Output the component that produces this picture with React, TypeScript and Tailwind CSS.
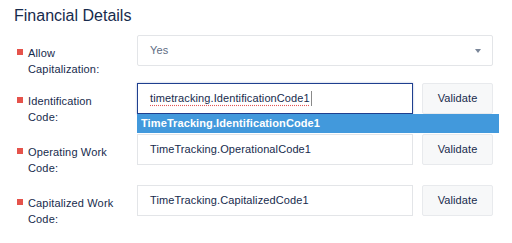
export default function App() {
  return (
    <div className="w-[512px] h-[243px] bg-white pl-[14px] pt-[6px] text-[#172b4d] overflow-hidden" style={{ fontFamily: '"Liberation Sans", Arial, sans-serif' }}>
      <h2 className="text-[16px] leading-[20px] font-normal">Financial Details</h2>

      {/* Allow capitalization */}
      <div className="flex h-[31px] mt-[9px]">
        <FieldLabel first="Allow" second="Capitalization:" />
        <div className="w-[356px] h-[31px] border border-[#e3e5e8] rounded-[2px] flex items-center justify-between pl-[12px] pr-[11px]">
          <span className="text-[11px] tracking-[0.1px] text-[#5e6c84]">Yes</span>
          <span className="w-0 h-0 border-l-[3.5px] border-r-[3.5px] border-t-[4px] border-l-transparent border-r-transparent border-t-[#7a8699]" />
        </div>
      </div>

      {/* Identification code, focused with suggestion */}
      <div className="flex h-[31px] mt-[17px] relative">
        <FieldLabel first="Identification" second="Code:" />
        <div className="w-[276px] h-[31px] border border-[#1f3f8f] shadow-[0_0_2px_rgba(31,63,143,0.35)] flex items-center pl-[12px]">
          <span className="text-[11px] tracking-[0.1px] underline decoration-dotted decoration-[#e25555] underline-offset-[3px]">timetracking.IdentificationCode1</span>
          <span className="w-px h-[15px] bg-[#8a8a8a] ml-px" />
        </div>
        <ValidateButton />
        <div className="absolute left-[123px] top-[31px] w-[362px] h-[19px] bg-[#4299dc] flex items-center pl-[4px] z-10">
          <span className="text-[11px] font-bold text-white tracking-[0.1px]">TimeTracking.IdentificationCode1</span>
        </div>
      </div>

      <div className="flex h-[31px] mt-[20px]">
        <FieldLabel first="Operating Work" second="Code:" />
        <TextField value="TimeTracking.OperationalCode1" />
        <ValidateButton />
      </div>

      <div className="flex h-[31px] mt-[20px]">
        <FieldLabel first="Capitalized Work" second="Code:" />
        <TextField value="TimeTracking.CapitalizedCode1" />
        <ValidateButton />
      </div>
    </div>
  );
}

function FieldLabel({ first, second }: { first: string; second: string }) {
  return (
    <div className="w-[123px] h-[31px] flex pl-[3px] pt-[10px]">
      <span className="w-[6px] h-[6px] bg-[#e5534b] mt-[4px] shrink-0" />
      <div className="ml-[5px] w-[92px] text-[11px] leading-[16px] tracking-[0.15px]">
        <div>{first}</div>
        <div>{second}</div>
      </div>
    </div>
  );
}

function TextField({ value }: { value: string }) {
  return (
    <div className="w-[276px] h-[31px] border border-[#e3e5e8] flex items-center pl-[12px]">
      <span className="text-[11px] tracking-[0.1px]">{value}</span>
    </div>
  );
}

function ValidateButton() {
  return (
    <button className="ml-[9px] w-[71px] h-[31px] bg-[#f7f8f9] border border-[#e8eaed] rounded-[2px] text-[11px] tracking-[0.1px] text-[#172b4d] flex items-center justify-center">
      Validate
    </button>
  );
}
